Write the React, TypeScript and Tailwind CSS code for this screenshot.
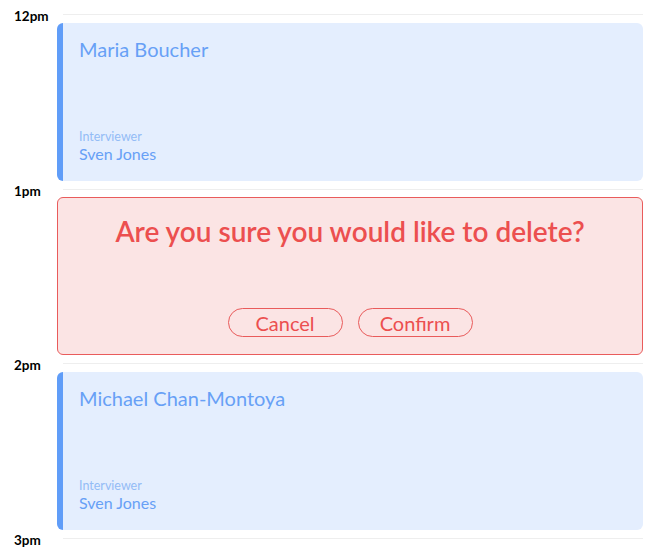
const hours = ['12pm', '1pm', '2pm', '3pm'];

type Slot =
    | { kind: 'interview'; candidate: string; interviewer: string }
    | { kind: 'confirm' }
    | null;

const slots: Slot[] = [
    { kind: 'interview', candidate: 'Maria Boucher', interviewer: 'Sven Jones' },
    { kind: 'confirm' },
    { kind: 'interview', candidate: 'Michael Chan-Montoya', interviewer: 'Sven Jones' },
    null,
];

const rowHeights = ['h-[175px]', 'h-[174px]', 'h-[175px]', 'h-[20px]'];

const InterviewCard = ({ candidate, interviewer }: { candidate: string; interviewer: string }) => (
    <div className="h-[158px] mt-[8px] flex flex-col justify-between rounded-md border-l-[6px] border-[#609df8] bg-[#e4eefe] pl-[16px] pt-[12px] pb-[17px]">
        <div className="text-[20px] leading-[28px] text-[#67a0f6]">{candidate}</div>
        <div>
            <div className="text-[12.5px] leading-[14px] text-[#93bcf6]">Interviewer</div>
            <div className="text-[16px] leading-[20px] text-[#67a0f6]">{interviewer}</div>
        </div>
    </div>
);

const DeleteConfirm = () => (
    <div className="h-[158px] mt-[7px] flex flex-col items-center rounded-md border border-[#e95b5b] bg-[#fbe4e4] pt-[15px]">
        <div className="text-[28px] leading-[36px] font-semibold text-[#ec4f4f]">
            Are you sure you would like to delete?
        </div>
        <div className="mt-auto mb-[17px] flex gap-[15px]">
            <button className="w-[115px] h-[29px] rounded-full border border-[#e95b5b] text-[20px] leading-none text-[#ec4f4f]">
                Cancel
            </button>
            <button className="w-[115px] h-[29px] rounded-full border border-[#e95b5b] text-[20px] leading-none text-[#ec4f4f]">
                Confirm
            </button>
        </div>
    </div>
);

export default function App() {
    return (
        <div className="min-h-screen bg-white pt-[14px] pr-[25px] font-['Lato',sans-serif]">
            {hours.map((hour, i) => {
                const slot = slots[i];
                return (
                    <div key={hour} className={`flex ${rowHeights[i]}`}>
                        <div className="w-[57px] shrink-0 pl-[14px] -mt-[6px] text-[13.5px] leading-[16px] font-bold text-black">
                            {hour}
                        </div>
                        <div className="flex-1">
                            <div className="ml-[6px] border-t border-[#eeeeee]" />
                            {slot?.kind === 'interview' && (
                                <InterviewCard candidate={slot.candidate} interviewer={slot.interviewer} />
                            )}
                            {slot?.kind === 'confirm' && <DeleteConfirm />}
                        </div>
                    </div>
                );
            })}
        </div>
    );
}
